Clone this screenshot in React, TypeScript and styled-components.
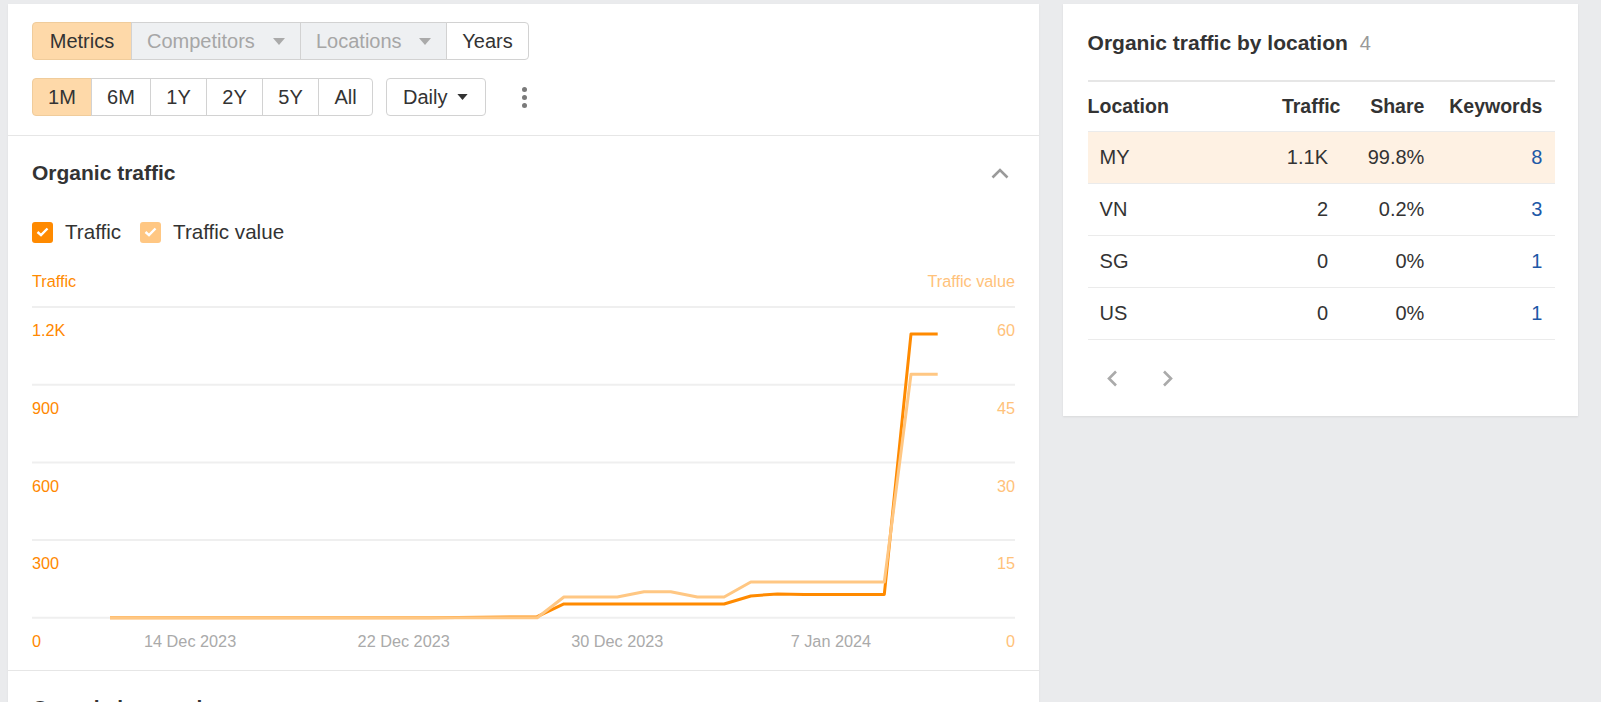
import styled, { createGlobalStyle } from "styled-components";

const GlobalStyle = createGlobalStyle`
  html, body {
    margin: 0;
    padding: 0;
    background: #eaebed;
  }
  body {
    font-family: "Liberation Sans", Arial, sans-serif;
    color: #333;
  }
  * {
    box-sizing: border-box;
  }
`;

const ORANGE = "#ff8a00";
const LIGHT = "#ffc783";

// daily points, 11 Dec 2023 → 11 Jan 2024
const traffic = [
  0, 0, 0, 0, 0, 0, 0, 0, 0, 0, 0, 0, 0, 1, 2, 3, 4, 53, 53, 53, 53, 53, 53, 53,
  84, 92, 90, 90, 90, 90, 1096, 1096,
];
const trafficValue = [
  0, 0, 0, 0, 0, 0, 0, 0, 0, 0, 0, 0, 0, 0, 0, 0, 0, 4, 4, 4, 5, 5, 4, 4, 6.9,
  6.9, 6.9, 6.9, 6.9, 6.9, 47, 47,
];

const CHART_W = 983;
const BASE_Y = 311.7;
const PLOT_H = 310.7;
const gridYs = [1, 78.7, 156.4, 234.1, BASE_Y];
const leftTicks = ["1.2K", "900", "600", "300", "0"];
const rightTicks = ["60", "45", "30", "15", "0"];
const dates = [
  { label: "14 Dec 2023", i: 3 },
  { label: "22 Dec 2023", i: 11 },
  { label: "30 Dec 2023", i: 19 },
  { label: "7 Jan 2024", i: 27 },
];

const xAt = (i: number) => 78 + 26.7 * i;
const toPoints = (data: number[], max: number) =>
  data.map((v, i) => `${xAt(i)},${BASE_Y - (v / max) * PLOT_H}`).join(" ");

const locations = [
  { code: "MY", traffic: "1.1K", share: "99.8%", keywords: "8", active: true },
  { code: "VN", traffic: "2", share: "0.2%", keywords: "3" },
  { code: "SG", traffic: "0", share: "0%", keywords: "1" },
  { code: "US", traffic: "0", share: "0%", keywords: "1" },
];

function Caret({ color = "#aaa" }: { color?: string }) {
  return (
    <svg width="12" height="7" viewBox="0 0 12 7">
      <path d="M0 0 H12 L6 7 Z" fill={color} />
    </svg>
  );
}

function Check() {
  return (
    <svg width="13" height="10" viewBox="0 0 13 10">
      <path
        d="M1.5 5 L5 8.2 L11.5 1.5"
        fill="none"
        stroke="#fff"
        strokeWidth="2.4"
      />
    </svg>
  );
}

export default function App() {
  return (
    <>
      <GlobalStyle />
      <Page>
        <LeftPanel>
          <Toolbar>
            <ButtonGroup>
              <Segment $active $w={100}>
                Metrics
              </Segment>
              <Segment $disabled $w={170}>
                Competitors
                <Caret />
              </Segment>
              <Segment $disabled $w={147}>
                Locations
                <Caret />
              </Segment>
              <Segment $w={83}>Years</Segment>
            </ButtonGroup>
            <ToolRow>
              <ButtonGroup>
                <Segment $active $w={60}>
                  1M
                </Segment>
                <Segment $w={60}>6M</Segment>
                <Segment $w={57}>1Y</Segment>
                <Segment $w={57}>2Y</Segment>
                <Segment $w={57}>5Y</Segment>
                <Segment $w={55}>All</Segment>
              </ButtonGroup>
              <DropButton>
                Daily
                <Caret color="#333" />
              </DropButton>
              <Kebab aria-label="More">
                <span />
                <span />
                <span />
              </Kebab>
            </ToolRow>
          </Toolbar>

          <ChartSection>
            <SectionHeader>
              <Title>Organic traffic</Title>
              <CollapseButton aria-label="Collapse">
                <svg width="18" height="11" viewBox="0 0 18 11">
                  <path
                    d="M1.5 9.5 L9 2 L16.5 9.5"
                    fill="none"
                    stroke="#9a9a9a"
                    strokeWidth="2.6"
                  />
                </svg>
              </CollapseButton>
            </SectionHeader>

            <Legend>
              <LegendItem>
                <CheckBox $color={ORANGE}>
                  <Check />
                </CheckBox>
                Traffic
              </LegendItem>
              <LegendItem>
                <CheckBox $color={LIGHT}>
                  <Check />
                </CheckBox>
                Traffic value
              </LegendItem>
            </Legend>

            <AxisRow>
              <AxisTitle $color={ORANGE}>Traffic</AxisTitle>
              <AxisTitle $color="#ffc27a">Traffic value</AxisTitle>
            </AxisRow>

            <ChartSvg
              width={CHART_W}
              height={350}
              viewBox={`0 0 ${CHART_W} 350`}
            >
              {gridYs.map((y) => (
                <line
                  key={y}
                  x1={0}
                  x2={CHART_W}
                  y1={y}
                  y2={y}
                  stroke="#efefef"
                  strokeWidth={2}
                />
              ))}
              {gridYs.map((y, k) => (
                <text key={`l${k}`} x={0} y={y + 29.3} fill="#ff8800">
                  {leftTicks[k]}
                </text>
              ))}
              {gridYs.map((y, k) => (
                <text
                  key={`r${k}`}
                  x={CHART_W}
                  y={y + 29.3}
                  fill="#ffc27a"
                  textAnchor="end"
                >
                  {rightTicks[k]}
                </text>
              ))}
              {dates.map((d) => (
                <text
                  key={d.label}
                  x={xAt(d.i)}
                  y={341}
                  fill="#aaa"
                  textAnchor="middle"
                >
                  {d.label}
                </text>
              ))}
              <polyline
                points={toPoints(traffic, 1200)}
                fill="none"
                stroke={ORANGE}
                strokeWidth={3}
                strokeLinejoin="round"
              />
              <polyline
                points={toPoints(trafficValue, 60)}
                fill="none"
                stroke={LIGHT}
                strokeWidth={3}
                strokeLinejoin="round"
              />
            </ChartSvg>
          </ChartSection>

          <NextSection>
            <Title>Organic keywords</Title>
          </NextSection>
        </LeftPanel>

        <RightPanel>
          <CardTitle>
            Organic traffic by location <Count>4</Count>
          </CardTitle>

          <Table>
            <HeadRow>
              <HeadCell>Location</HeadCell>
              <HeadCell $right $pr={12.6}>
                Traffic
              </HeadCell>
              <HeadCell $right $pr={12.6}>
                Share
              </HeadCell>
              <HeadCell $right $pr={12.6}>
                Keywords
              </HeadCell>
            </HeadRow>
            {locations.map((row) => (
              <BodyRow key={row.code} $active={row.active}>
                <DataCell $pl={12}>{row.code}</DataCell>
                <DataCell $right $pr={25}>
                  {row.traffic}
                </DataCell>
                <DataCell $right $pr={12.6}>
                  {row.share}
                </DataCell>
                <DataCell $right $pr={12.6}>
                  <KeywordLink href="#">{row.keywords}</KeywordLink>
                </DataCell>
              </BodyRow>
            ))}
          </Table>

          <Pager>
            <PagerButton aria-label="Previous">
              <svg width="12" height="17" viewBox="0 0 12 17">
                <path
                  d="M10 1.5 L3 8.5 L10 15.5"
                  fill="none"
                  stroke="#aaa"
                  strokeWidth="2.6"
                />
              </svg>
            </PagerButton>
            <PagerButton aria-label="Next">
              <svg width="12" height="17" viewBox="0 0 12 17">
                <path
                  d="M2 1.5 L9 8.5 L2 15.5"
                  fill="none"
                  stroke="#aaa"
                  strokeWidth="2.6"
                />
              </svg>
            </PagerButton>
          </Pager>
        </RightPanel>
      </Page>
    </>
  );
}

const Page = styled.div`
  display: flex;
  align-items: flex-start;
  gap: 24px;
  padding: 4px 23px 0 8px;
`;

const LeftPanel = styled.div`
  width: 1031px;
  flex-shrink: 0;
  background: #fff;
  box-shadow: 0 1px 2px rgba(0, 0, 0, 0.06);
`;

const Toolbar = styled.div`
  display: flex;
  flex-direction: column;
  align-items: flex-start;
  gap: 18px;
  padding: 18px 24px 19px;
  border-bottom: 1px solid #e6e6e6;
`;

const ToolRow = styled.div`
  display: flex;
  align-items: center;
`;

const ButtonGroup = styled.div`
  display: flex;
`;

const Segment = styled.button<{
  $active?: boolean;
  $disabled?: boolean;
  $w: number;
}>`
  width: ${(p) => p.$w}px;
  height: 38px;
  display: flex;
  align-items: center;
  justify-content: ${(p) => (p.$disabled ? "space-between" : "center")};
  padding: 0 15px;
  margin-left: -1px;
  font-family: inherit;
  font-size: 20px;
  color: ${(p) => (p.$disabled ? "#a6a6a6" : "#333")};
  background: ${(p) =>
    p.$active ? "#fed9a9" : p.$disabled ? "#eef0f2" : "#fff"};
  border: 1px solid ${(p) => (p.$active ? "#f0cc9b" : "#d2d2d2")};
  cursor: pointer;

  &:first-child {
    margin-left: 0;
    border-radius: 4px 0 0 4px;
  }
  &:last-child {
    border-radius: 0 4px 4px 0;
  }
`;

const DropButton = styled.button`
  height: 38px;
  margin-left: 13px;
  display: flex;
  align-items: center;
  gap: 10px;
  padding: 0 17px 0 16px;
  font-family: inherit;
  font-size: 20px;
  color: #333;
  background: #fff;
  border: 1px solid #d2d2d2;
  border-radius: 4px;
  cursor: pointer;

  svg {
    width: 11px;
    height: 6px;
  }
`;

const Kebab = styled.button`
  margin-left: 36px;
  display: flex;
  flex-direction: column;
  gap: 3px;
  padding: 0;
  border: none;
  background: transparent;
  cursor: pointer;

  span {
    width: 5px;
    height: 5px;
    border-radius: 50%;
    background: #7a7a7a;
  }
`;

const ChartSection = styled.section`
  padding: 25px 24px 14px;
  border-bottom: 1px solid #e6e6e6;
`;

const SectionHeader = styled.div`
  display: flex;
  align-items: center;
  justify-content: space-between;
  height: 24px;
`;

const Title = styled.h2`
  margin: 0;
  font-size: 21px;
  font-weight: 700;
  line-height: 24px;
  color: #333;
`;

const CollapseButton = styled.button`
  width: 24px;
  height: 24px;
  display: flex;
  align-items: center;
  justify-content: center;
  padding: 0;
  margin-right: 3px;
  border: none;
  background: transparent;
  cursor: pointer;
`;

const Legend = styled.div`
  margin-top: 35px;
  display: flex;
  align-items: center;
  gap: 19px;
  height: 24px;
`;

const LegendItem = styled.label`
  display: flex;
  align-items: center;
  gap: 12px;
  font-size: 20.6px;
  color: #333;
  cursor: pointer;
`;

const CheckBox = styled.span<{ $color: string }>`
  width: 21px;
  height: 21px;
  border-radius: 3px;
  background: ${(p) => p.$color};
  display: flex;
  align-items: center;
  justify-content: center;
`;

const AxisRow = styled.div`
  margin-top: 27px;
  display: flex;
  justify-content: space-between;
  line-height: 20px;
`;

const AxisTitle = styled.span<{ $color: string }>`
  font-size: 16.25px;
  color: ${(p) => p.$color};
`;

const ChartSvg = styled.svg`
  display: block;
  margin-top: 14.6px;
  overflow: visible;

  text {
    font-family: "Liberation Sans", Arial, sans-serif;
    font-size: 16.25px;
  }
`;

const NextSection = styled.section`
  padding: 25px 24px;
  height: 220px;
`;

const RightPanel = styled.aside`
  width: 515px;
  flex-shrink: 0;
  background: #fff;
  padding: 27px 23px 19px 24.6px;
  box-shadow: 0 1px 2px rgba(0, 0, 0, 0.08);
`;

const CardTitle = styled.h3`
  margin: 0;
  font-size: 21px;
  font-weight: 700;
  line-height: 24px;
  color: #333;
  white-space: nowrap;
`;

const Count = styled.span`
  margin-left: 6px;
  font-weight: 400;
  font-size: 20px;
  color: #999;
`;

const Table = styled.div`
  margin-top: 25px;
  border-top: 2px solid #e6e6e6;
`;

const gridCols = `
  display: grid;
  grid-template-columns: 1fr 100px 84px 118px;
  align-items: center;
  border-bottom: 1px solid #ebebeb;
`;

const HeadRow = styled.div`
  ${gridCols}
  height: 50px;
`;

const BodyRow = styled.div<{ $active?: boolean }>`
  ${gridCols}
  height: 52px;
  background: ${(p) => (p.$active ? "#fef1e3" : "transparent")};
`;

const HeadCell = styled.div<{ $right?: boolean; $pr?: number }>`
  font-size: 19.5px;
  font-weight: 700;
  color: #333;
  text-align: ${(p) => (p.$right ? "right" : "left")};
  padding-right: ${(p) => p.$pr ?? 0}px;
  white-space: nowrap;
`;

const DataCell = styled.div<{ $right?: boolean; $pr?: number; $pl?: number }>`
  font-size: 20px;
  color: #333;
  text-align: ${(p) => (p.$right ? "right" : "left")};
  padding-right: ${(p) => p.$pr ?? 0}px;
  padding-left: ${(p) => p.$pl ?? 0}px;
  white-space: nowrap;
`;

const KeywordLink = styled.a`
  color: #1d58a7;
  text-decoration: none;
`;

const Pager = styled.div`
  margin-top: 20px;
  height: 37px;
  display: flex;
  align-items: center;
  gap: 30px;
  padding-left: 11.4px;
`;

const PagerButton = styled.button`
  width: 26px;
  height: 26px;
  display: flex;
  align-items: center;
  justify-content: center;
  padding: 0;
  border: none;
  background: transparent;
  cursor: pointer;
`;
